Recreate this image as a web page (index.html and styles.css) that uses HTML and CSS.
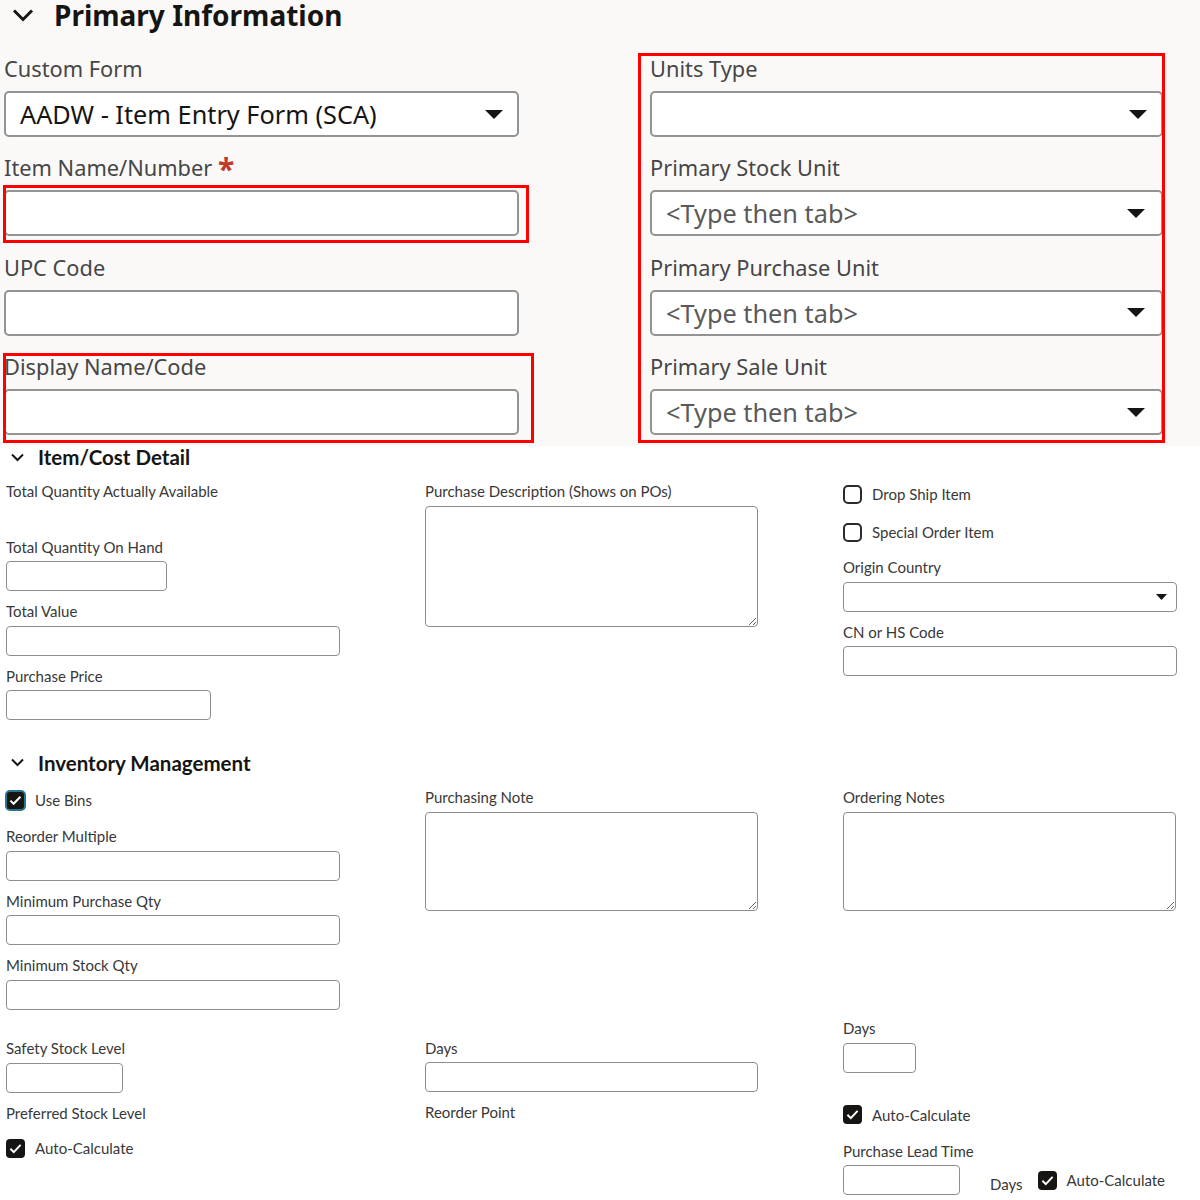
FILE: index.html
```html
<!DOCTYPE html>
<html>
<head>
<meta charset="utf-8">
<title>Item Entry</title>
<link rel="stylesheet" href="styles.css">
</head>
<body>
<section class="primary">
  <div class="sec-head head-lg">
    <svg class="chev-lg" width="22" height="14" viewBox="0 0 22 14"><path d="M2 2.5 L11 11.5 L20 2.5" fill="none" stroke="#161513" stroke-width="3"/></svg>
    <h1 class="title-lg">Primary Information</h1>
  </div>
  <div class="pgrid">
    <div class="pcol">
      <div class="pfield">
        <label class="plabel">Custom Form</label>
        <div class="pctl"><span class="pval">AADW - Item Entry Form (SCA)</span><svg class="tri-lg" width="18" height="9" viewBox="0 0 18 9"><path d="M0 0 H18 L9 9 Z" fill="#161513"/></svg></div>
      </div>
      <div class="pfield">
        <label class="plabel">Item Name/Number <span class="req">*</span></label>
        <div class="mark mark-item"><input class="pctl pinput" type="text"></div>
      </div>
      <div class="pfield">
        <label class="plabel">UPC Code</label>
        <input class="pctl pinput" type="text">
      </div>
      <div class="pfield mark mark-display">
        <label class="plabel">Display Name/Code</label>
        <input class="pctl pinput" type="text">
      </div>
    </div>
    <div class="pcol mark mark-units">
      <div class="pfield">
        <label class="plabel">Units Type</label>
        <div class="pctl"><span class="pval"></span><svg class="tri-lg" width="18" height="9" viewBox="0 0 18 9"><path d="M0 0 H18 L9 9 Z" fill="#161513"/></svg></div>
      </div>
      <div class="pfield">
        <label class="plabel">Primary Stock Unit</label>
        <div class="pctl"><span class="pval ph">&lt;Type then tab&gt;</span><svg class="tri-lg tri-in" width="18" height="9" viewBox="0 0 18 9"><path d="M0 0 H18 L9 9 Z" fill="#161513"/></svg></div>
      </div>
      <div class="pfield">
        <label class="plabel">Primary Purchase Unit</label>
        <div class="pctl"><span class="pval ph">&lt;Type then tab&gt;</span><svg class="tri-lg tri-in" width="18" height="9" viewBox="0 0 18 9"><path d="M0 0 H18 L9 9 Z" fill="#161513"/></svg></div>
      </div>
      <div class="pfield">
        <label class="plabel">Primary Sale Unit</label>
        <div class="pctl"><span class="pval ph">&lt;Type then tab&gt;</span><svg class="tri-lg tri-in" width="18" height="9" viewBox="0 0 18 9"><path d="M0 0 H18 L9 9 Z" fill="#161513"/></svg></div>
      </div>
    </div>
  </div>
</section>

<section class="sec sec-cost">
  <div class="sec-head head-sm">
    <svg class="chev-sm" width="13" height="9" viewBox="0 0 13 9"><path d="M1 1.5 L6.5 7 L12 1.5" fill="none" stroke="#161513" stroke-width="2"/></svg>
    <h2 class="title-sm">Item/Cost Detail</h2>
  </div>
  <div class="grid3">
    <div class="col">
      <div class="field">
        <div class="lbl">Total Quantity Actually Available</div>
        <div class="value-empty"></div>
      </div>
      <div class="field">
        <div class="lbl">Total Quantity On Hand</div>
        <input class="inp w161" type="text">
      </div>
      <div class="field">
        <div class="lbl">Total Value</div>
        <input class="inp w334" type="text">
      </div>
      <div class="field">
        <div class="lbl">Purchase Price</div>
        <input class="inp w205" type="text">
      </div>
    </div>
    <div class="col">
      <div class="field">
        <div class="lbl">Purchase Description (Shows on POs)</div>
        <textarea class="ta ta-tall"></textarea>
      </div>
    </div>
    <div class="col">
      <div class="check-row">
        <span class="cb"></span><span>Drop Ship Item</span>
      </div>
      <div class="check-row">
        <span class="cb"></span><span>Special Order Item</span>
      </div>
      <div class="field">
        <div class="lbl">Origin Country</div>
        <div class="inp w334 sel"><svg width="11" height="6" viewBox="0 0 11 6"><path d="M0 0 H11 L5.5 6 Z" fill="#161513"/></svg></div>
      </div>
      <div class="field">
        <div class="lbl">CN or HS Code</div>
        <input class="inp w334" type="text">
      </div>
    </div>
  </div>
</section>

<section class="sec sec-inv">
  <div class="sec-head head-sm">
    <svg class="chev-sm" width="13" height="9" viewBox="0 0 13 9"><path d="M1 1.5 L6.5 7 L12 1.5" fill="none" stroke="#161513" stroke-width="2"/></svg>
    <h2 class="title-sm">Inventory Management</h2>
  </div>
  <div class="grid3">
    <div class="col">
      <div class="check-row row-bins">
        <span class="cb on focus"><svg width="17" height="17" viewBox="0 0 17 17"><path d="M3.4 8.6 L6.6 11.8 L13.4 4.8" fill="none" stroke="#fff" stroke-width="2"/></svg></span><span>Use Bins</span>
      </div>
      <div class="field">
        <div class="lbl">Reorder Multiple</div>
        <input class="inp w334" type="text">
      </div>
      <div class="field">
        <div class="lbl">Minimum Purchase Qty</div>
        <input class="inp w334" type="text">
      </div>
      <div class="field">
        <div class="lbl">Minimum Stock Qty</div>
        <input class="inp w334" type="text">
      </div>
      <div class="field f-safety">
        <div class="lbl">Safety Stock Level</div>
        <input class="inp w117" type="text">
      </div>
      <div class="field label-only">
        <div class="lbl">Preferred Stock Level</div>
      </div>
      <div class="check-row">
        <span class="cb on"><svg width="19" height="19" viewBox="0 0 19 19"><path d="M4.4 9.8 L7.8 13.1 L14.6 5.9" fill="none" stroke="#fff" stroke-width="2"/></svg></span><span>Auto-Calculate</span>
      </div>
    </div>
    <div class="col">
      <div class="field">
        <div class="lbl">Purchasing Note</div>
        <textarea class="ta ta-mid"></textarea>
      </div>
      <div class="field f-days2">
        <div class="lbl">Days</div>
        <input class="inp w333" type="text">
      </div>
      <div class="field label-only">
        <div class="lbl">Reorder Point</div>
      </div>
    </div>
    <div class="col">
      <div class="field">
        <div class="lbl">Ordering Notes</div>
        <textarea class="ta ta-mid w334"></textarea>
      </div>
      <div class="field f-days3">
        <div class="lbl">Days</div>
        <input class="inp w73" type="text">
      </div>
      <div class="check-row row-auto3">
        <span class="cb on"><svg width="19" height="19" viewBox="0 0 19 19"><path d="M4.4 9.8 L7.8 13.1 L14.6 5.9" fill="none" stroke="#fff" stroke-width="2"/></svg></span><span>Auto-Calculate</span>
      </div>
      <div class="field">
        <div class="lbl">Purchase Lead Time</div>
        <div class="lead-row">
          <input class="inp w117" type="text">
          <span class="days-unit">Days</span>
          <span class="check-inline">
            <span class="cb on"><svg width="19" height="19" viewBox="0 0 19 19"><path d="M4.4 9.8 L7.8 13.1 L14.6 5.9" fill="none" stroke="#fff" stroke-width="2"/></svg></span><span>Auto-Calculate</span>
          </span>
        </div>
      </div>
    </div>
  </div>
</section>
</body>
</html>
```

FILE: styles.css
```css
* { box-sizing: border-box; }

html, body {
  margin: 0;
  padding: 0;
  background: #ffffff;
}

body {
  width: 1200px;
  font-family: Lato, "Noto Sans", "DejaVu Sans", sans-serif;
  color: #161513;
}

/* ---------- Primary Information ---------- */
.primary {
  background: #fbf9f8;
  height: 446px;
  padding: 0 0 0 4px;
  font-family: "Noto Sans", "Open Sans", sans-serif;
}

.sec-head {
  display: flex;
  align-items: center;
}

.head-lg {
  height: 30px;
  padding-left: 8px;
  gap: 20px;
}

.chev-lg { display: block; flex: none; }

.title-lg {
  margin: 0;
  font-size: 28px;
  line-height: 30px;
  font-weight: 700;
  color: #161513;
}

.pgrid {
  display: grid;
  grid-template-columns: 515px 513px;
  column-gap: 131px;
  margin-top: 26px;
}

.pfield { margin-bottom: 18.3px; }
.pfield:last-child { margin-bottom: 0; }

.plabel {
  display: block;
  font-size: 21.8px;
  line-height: 26px;
  color: #464646;
  margin-bottom: 9.1px;
  white-space: nowrap;
}

.req {
  color: #c0392b;
  font-weight: 700;
  font-size: 30px;
  line-height: 0;
  vertical-align: -4px;
}

.pctl {
  display: flex;
  align-items: center;
  width: 100%;
  height: 46px;
  background: #ffffff;
  border: 2px solid #939393;
  border-radius: 5px;
  padding: 0 14px;
  font-family: inherit;
  font-size: 25px;
  color: #161513;
  outline: none;
}

.pval {
  flex: 1;
  font-size: 25.3px;
  color: #161513;
  white-space: nowrap;
}

.pval.ph { color: #5a5a5a; }

.tri-lg { display: block; flex: none; }
.tri-in { margin-right: 2px; }

/* red review annotations drawn over the fields */
.mark { position: relative; }
.mark::after {
  content: "";
  position: absolute;
  border: 3px solid #ff0000;
  pointer-events: none;
}
.mark-item::after { top: -5px; left: -1px; right: -10px; bottom: -7px; }
.mark-display::after { top: -1px; left: -1px; right: -15px; bottom: -8px; }
.mark-units::after { top: -2.6px; left: -12px; right: -2px; bottom: -8px; }

/* ---------- Lower sections ---------- */
.head-sm {
  height: 22px;
  padding-left: 11px;
  gap: 14px;
}

.chev-sm { display: block; flex: none; }

.title-sm {
  margin: 0;
  font-size: 20.5px;
  line-height: 22px;
  font-weight: 700;
  color: #161513;
}

.sec-inv { margin-top: 20.3px; }

.grid3 {
  display: grid;
  grid-template-columns: 419px 418px 357px;
  padding-left: 6px;
  margin-top: 14.4px;
}

.col {
  display: flex;
  flex-direction: column;
  align-items: flex-start;
}

.field {
  display: flex;
  flex-direction: column;
  align-items: flex-start;
  margin-bottom: 11px;
}

.lbl {
  font-size: 15px;
  line-height: 18px;
  color: #383838;
  margin-bottom: 5.5px;
  white-space: nowrap;
}

.label-only .lbl { margin-bottom: 0; }
.label-only { margin-bottom: 14.3px; }

.value-empty { height: 21px; }

.inp {
  height: 30px;
  background: #ffffff;
  border: 1px solid #8e8e8e;
  border-radius: 4px;
  font-family: inherit;
  font-size: 14px;
  padding: 0 6px;
  outline: none;
}

.sel {
  display: flex;
  align-items: center;
  justify-content: flex-end;
  padding-right: 9px;
}
.sel svg { display: block; }

.w73 { width: 73px; }
.w117 { width: 117px; }
.w161 { width: 161px; }
.w205 { width: 205px; }
.w333 { width: 333px; }
.w334 { width: 334px; }

.ta {
  width: 333px;
  border: 1px solid #8e8e8e;
  border-radius: 4px;
  background: #ffffff;
  resize: both;
  font-family: inherit;
  outline: none;
  margin: 0;
}
.ta-tall { height: 121px; }
.ta-mid { height: 99px; }

.check-row {
  display: flex;
  align-items: center;
  gap: 10px;
  height: 24px;
  margin-bottom: 14px;
  font-size: 15px;
  color: #383838;
  white-space: nowrap;
}

.cb {
  flex: none;
  display: flex;
  align-items: center;
  justify-content: center;
  width: 19px;
  height: 19px;
  border: 2px solid #2b2b2b;
  border-radius: 5px;
  background: #ffffff;
}

.cb.on {
  border: 0;
  background: #161513;
  border-radius: 4px;
}

.cb.on svg { display: block; }

.cb.focus {
  width: 21px;
  height: 21px;
  border: 2px solid #2a7391;
  border-radius: 5px;
  background: #161513;
}

.row-bins { gap: 9px; margin-bottom: 15px; margin-left: -1px; }

.f-safety { margin-top: 18.8px; }
.f-days2 { margin-top: 117px; }
.f-days3 { margin-top: 97.7px; }
.row-auto3 { margin-top: 19px; margin-bottom: 15.2px; }

.lead-row {
  display: flex;
  align-items: center;
  height: 30px;
  font-size: 15px;
  color: #383838;
}

.days-unit {
  margin-left: 30px;
  margin-top: 7px;
}

.check-inline {
  display: flex;
  align-items: center;
  gap: 10px;
  margin-left: 15px;
}
```
